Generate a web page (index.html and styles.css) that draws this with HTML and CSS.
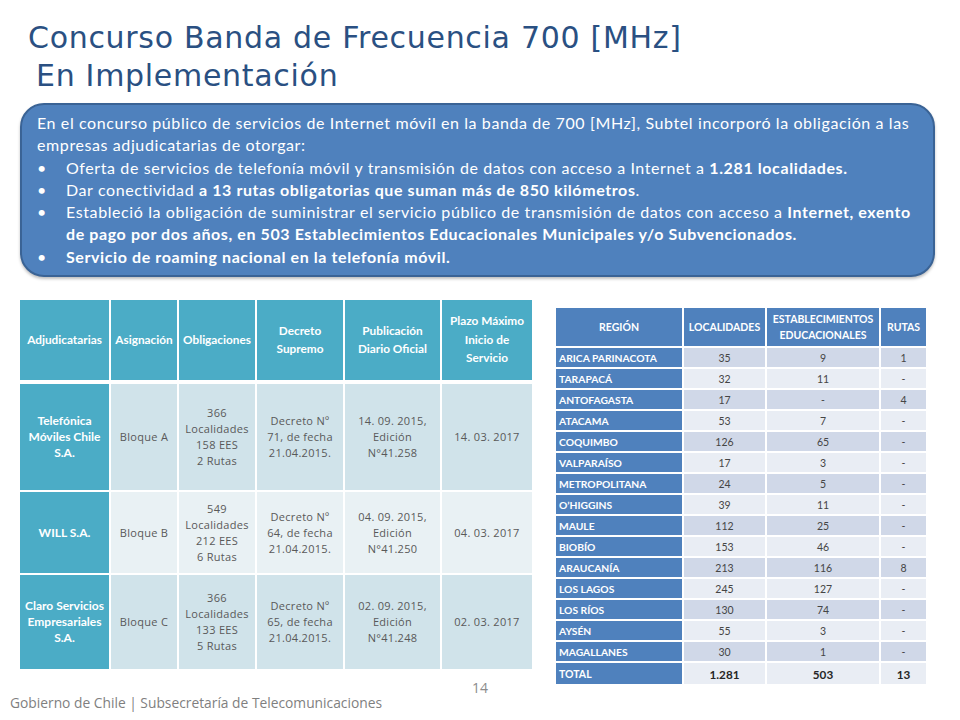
FILE: index.html
```html
<!DOCTYPE html>
<html lang="es">
<head>
<meta charset="utf-8">
<title>Concurso Banda de Frecuencia 700 [MHz]</title>
<link rel="stylesheet" href="styles.css">
</head>
<body>
<div class="slide">
  <h1 class="title">
    <span class="t1">Concurso Banda de Frecuencia 700 [MHz]</span>
    <span class="t2">En Implementación</span>
  </h1>

  <div class="box">
    <p class="intro">En el concurso público de servicios de Internet móvil en la banda de 700 [MHz], Subtel incorporó la obligación a las empresas adjudicatarias de otorgar:</p>
    <ul class="bullets">
      <li>Oferta de servicios de telefonía móvil y transmisión de datos con acceso a Internet a <b>1.281 localidades.</b></li>
      <li>Dar conectividad <b>a 13 rutas obligatorias que suman más de 850 kilómetros</b>.</li>
      <li>Estableció la obligación de suministrar el servicio público de transmisión de datos con acceso a <b>Internet, exento</b> <b>de pago por dos años, en 503 Establecimientos Educacionales Municipales y/o Subvencionados.</b></li>
      <li><b>Servicio de roaming nacional en la telefonía móvil.</b></li>
    </ul>
  </div>

  <div class="tables">
    <table class="adj">
      <colgroup>
        <col class="c1"><col class="c2"><col class="c3"><col class="c4"><col class="c5"><col class="c6">
      </colgroup>
      <thead>
        <tr>
          <th>Adjudicatarias</th>
          <th>Asignación</th>
          <th>Obligaciones</th>
          <th>Decreto<br>Supremo</th>
          <th>Publicación<br>Diario Oficial</th>
          <th>Plazo Máximo<br>Inicio de<br>Servicio</th>
        </tr>
      </thead>
      <tbody>
        <tr class="r1 dark">
          <th>Telefónica<br>Móviles Chile<br>S.A.</th>
          <td>Bloque A</td>
          <td>366<br>Localidades<br>158 EES<br>2 Rutas</td>
          <td>Decreto Nº<br>71, de fecha<br>21.04.2015.</td>
          <td>14. 09. 2015,<br>Edición<br>N°41.258</td>
          <td>14. 03. 2017</td>
        </tr>
        <tr class="r2 light">
          <th>WILL S.A.</th>
          <td>Bloque B</td>
          <td>549<br>Localidades<br>212 EES<br>6 Rutas</td>
          <td>Decreto Nº<br>64, de fecha<br>21.04.2015.</td>
          <td>04. 09. 2015,<br>Edición<br>N°41.250</td>
          <td>04. 03. 2017</td>
        </tr>
        <tr class="r3 dark">
          <th>Claro Servicios<br>Empresariales<br>S.A.</th>
          <td>Bloque C</td>
          <td>366<br>Localidades<br>133 EES<br>5 Rutas</td>
          <td>Decreto Nº<br>65, de fecha<br>21.04.2015.</td>
          <td>02. 09. 2015,<br>Edición<br>N°41.248</td>
          <td>02. 03. 2017</td>
        </tr>
      </tbody>
    </table>

    <table class="reg">
      <colgroup>
        <col class="k1"><col class="k2"><col class="k3"><col class="k4">
      </colgroup>
      <thead>
        <tr>
          <th>REGIÓN</th>
          <th>LOCALIDADES</th>
          <th>ESTABLECIMIENTOS<br>EDUCACIONALES</th>
          <th>RUTAS</th>
        </tr>
      </thead>
      <tbody>
        <tr class="dk"><th>ARICA PARINACOTA</th><td>35</td><td>9</td><td>1</td></tr>
        <tr class="lt"><th>TARAPACÁ</th><td>32</td><td>11</td><td>-</td></tr>
        <tr class="dk"><th>ANTOFAGASTA</th><td>17</td><td>-</td><td>4</td></tr>
        <tr class="lt"><th>ATACAMA</th><td>53</td><td>7</td><td>-</td></tr>
        <tr class="dk"><th>COQUIMBO</th><td>126</td><td>65</td><td>-</td></tr>
        <tr class="lt"><th>VALPARAÍSO</th><td>17</td><td>3</td><td>-</td></tr>
        <tr class="dk"><th>METROPOLITANA</th><td>24</td><td>5</td><td>-</td></tr>
        <tr class="lt"><th>O’HIGGINS</th><td>39</td><td>11</td><td>-</td></tr>
        <tr class="dk"><th>MAULE</th><td>112</td><td>25</td><td>-</td></tr>
        <tr class="lt"><th>BIOBÍO</th><td>153</td><td>46</td><td>-</td></tr>
        <tr class="dk"><th>ARAUCANÍA</th><td>213</td><td>116</td><td>8</td></tr>
        <tr class="lt"><th>LOS LAGOS</th><td>245</td><td>127</td><td>-</td></tr>
        <tr class="dk"><th>LOS RÍOS</th><td>130</td><td>74</td><td>-</td></tr>
        <tr class="lt"><th>AYSÉN</th><td>55</td><td>3</td><td>-</td></tr>
        <tr class="dk"><th>MAGALLANES</th><td>30</td><td>1</td><td>-</td></tr>
        <tr class="lt total"><th>TOTAL</th><td>1.281</td><td>503</td><td>13</td></tr>
      </tbody>
    </table>
  </div>

  <div class="pagenum">14</div>
  <footer class="footer">Gobierno de Chile | Subsecretaría de Telecomunicaciones</footer>
</div>
</body>
</html>
```

FILE: styles.css
```css
html, body {
  margin: 0;
  padding: 0;
  background: #ffffff;
}

.slide {
  position: relative;
  width: 960px;
  height: 720px;
  overflow: hidden;
  font-family: "Lato", "Liberation Sans", sans-serif;
}

.title {
  margin: 0;
  padding: 19px 0 0 28px;
  font-family: "DejaVu Sans", "Liberation Sans", sans-serif;
  font-weight: normal;
  font-size: 30px;
  line-height: 38px;
  color: #2a5082;
  letter-spacing: 0.7px;
}
.title span { display: block; white-space: nowrap; }
.title .t2 { padding-left: 8px; }

.box {
  margin: 8px 25px 0 20px;
  height: 174px;
  box-sizing: border-box;
  background: #4f81bd;
  border: 2px solid #3a6395;
  border-radius: 24px;
  padding: 7px 8px 0 15px;
  color: #ffffff;
  font-family: "Lato", "Liberation Sans", sans-serif;
  font-size: 16px;
  letter-spacing: 0.6px;
  line-height: 22.3px;
  box-shadow: 0 2px 3px rgba(0,0,0,0.25);
}
.intro { margin: 0; }
.bullets {
  margin: 0;
  padding: 0;
  list-style: none;
}
.bullets li {
  position: relative;
  padding-left: 29px;
}
.bullets li::before {
  content: "•";
  position: absolute;
  left: 0;
  top: 0;
}

.tables {
  display: flex;
  align-items: flex-start;
  margin-top: 21px;
  padding-left: 18px;
}

/* left table */
.adj {
  border-collapse: separate;
  border-spacing: 2px;
  width: 514px;
  table-layout: fixed;
}
.adj .c1 { width: 89px; }
.adj .c2 { width: 66px; }
.adj .c3 { width: 76px; }
.adj .c4 { width: 86px; }
.adj .c5 { width: 95px; }
.adj .c6 { width: 90px; }
.adj thead th {
  background: #4bacc6;
  color: #ffffff;
  font-weight: bold;
  font-size: 11.8px;
  line-height: 18.5px;
  height: 80px;
  padding: 0 1px;
  text-align: center;
}
.adj tbody th {
  background: #4bacc6;
  color: #ffffff;
  font-weight: bold;
  font-size: 12px;
  line-height: 16px;
  padding: 0 1px;
}
.adj tbody td {
  text-align: center;
  color: #595959;
  font-family: "Open Sans", "Liberation Sans", sans-serif;
  font-size: 11px;
  line-height: 16px;
  letter-spacing: 0.3px;
  padding: 0 1px;
}
.adj tbody tr:first-child th,
.adj tbody tr:first-child td { border-top: 2px solid #ffffff; }
.adj .r1 th, .adj .r1 td { height: 106px; }
.adj .r2 th, .adj .r2 td { height: 81px; }
.adj .r3 th, .adj .r3 td { height: 94px; }
.adj .dark td { background: #d0e3ea; }
.adj .light td { background: #e9f1f4; }

/* right table */
.reg {
  margin-left: 20px;
  margin-top: 8px;
  border-collapse: separate;
  border-spacing: 2px;
  width: 374px;
  table-layout: fixed;
}
.reg .k1 { width: 126px; }
.reg .k2 { width: 81px; }
.reg .k3 { width: 112px; }
.reg .k4 { width: 45px; }
.reg thead th {
  background: #4f81bd;
  color: #ffffff;
  font-weight: bold;
  font-size: 10.5px;
  line-height: 16px;
  height: 38px;
  padding: 0;
  text-align: center;
}
.reg tbody th {
  background: #4f81bd;
  color: #ffffff;
  font-weight: bold;
  font-size: 10.3px;
  text-align: left;
  padding: 0 0 0 3px;
  height: 19px;
  white-space: nowrap;
}
.reg tbody td {
  text-align: center;
  color: #454545;
  font-family: "Lato", "Liberation Sans", sans-serif;
  font-size: 10.5px;
  padding: 0;
  height: 19px;
}
.reg .dk td { background: #d0d8e8; }
.reg .lt td { background: #e9edf4; }
.reg .total th {
  height: 21px;
  font-size: 10.5px;
}
.reg .total td {
  height: 21px;
  font-weight: bold;
  font-size: 11.7px;
  color: #262626;
}

.pagenum {
  position: absolute;
  left: 472px;
  top: 678px;
  font-size: 14px;
  color: #8c8c8c;
  font-family: "Open Sans", "Liberation Sans", sans-serif;
}
.footer {
  position: absolute;
  left: 10px;
  top: 693px;
  font-size: 13.8px;
  color: #7f7f7f;
  font-family: "Open Sans", "Liberation Sans", sans-serif;
}
```
